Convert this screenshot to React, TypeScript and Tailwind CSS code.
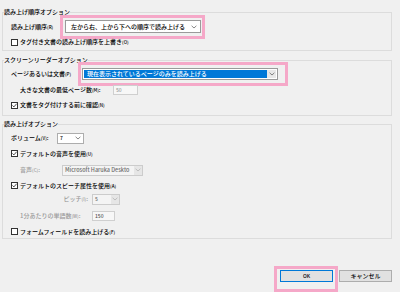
import React from "react";

const Chevron = ({ color = "#555" }: { color?: string }) => (
  <svg width="6" height="4" viewBox="0 0 6 4" className="shrink-0">
    <path d="M0.6 0.8 L3 3 L5.4 0.8" stroke={color} strokeWidth="0.7" fill="none" />
  </svg>
);

function Check({ checked }: { checked?: boolean }) {
  return (
    <span className="w-[7px] h-[7px] border border-[#333] bg-white flex items-center justify-center shrink-0">
      {checked && (
        <svg width="5" height="5" viewBox="0 0 5 5">
          <path d="M0.4 2.4 L1.9 3.9 L4.7 0.7" stroke="#222" strokeWidth="0.8" fill="none" />
        </svg>
      )}
    </span>
  );
}

const Key = ({ k }: { k: string }) => <span className="text-[4.5px]">({k})</span>;

function Group({ title, className, children }: { title: string; className: string; children: React.ReactNode }) {
  return (
    <div className={`border border-[#dcdcdc] flex flex-col ${className}`}>
      <div className="-mt-[5px] ml-[1px] w-fit bg-[#f0f0f0] text-[6px] leading-[8px] text-black">{title}</div>
      {children}
    </div>
  );
}

function CheckRow({ checked, label, k, className }: { checked?: boolean; label: string; k: string; className: string }) {
  return (
    <div className={`flex items-center pl-[8px] gap-[2px] text-[6px] leading-[8px] ${className}`}>
      <Check checked={checked} />
      <span>
        {label}
        <Key k={k} />
      </span>
    </div>
  );
}

export default function App() {
  return (
    <div className="w-[400px] h-[292px] overflow-hidden bg-[#f0f0f0] pt-[12px] pl-[2px] pr-[8px] flex flex-col text-black font-medium font-['Noto_Sans_CJK_JP','Noto_Sans',sans-serif]">
      <Group title="読み上げ順序オプション" className="h-[40px]">
        <div className="-mt-[1px] h-[24px] flex items-center pl-[8px]">
          <div className="w-[49px] shrink-0 text-[6px] leading-[8px]">
            読み上げ順序<Key k="R" />
          </div>
          <div className="w-[145px] shrink-0 h-[24px] border-[3px] border-[#f5a8c8] pl-[2px] pr-[1px] pt-[2px]">
            <div className="h-[13px] bg-white border border-[#9a9a9a] flex items-center pl-[5px] pr-[3px] text-[6px] leading-[8px]">
              <span className="flex-1 whitespace-nowrap">左から右、上から下への順序で読み上げる</span>
              <Chevron />
            </div>
          </div>
        </div>
        <CheckRow label="タグ付き文書の読み上げ順序を上書き" k="O" className="-mt-[1px] h-[8px]" />
      </Group>

      <Group title="スクリーンリーダーオプション" className="mt-[9px] h-[56px]">
        <div className="-mt-[2px] h-[24px] flex items-center pl-[8px]">
          <div className="w-[67px] shrink-0 text-[6px] leading-[8px]">
            ページあるいは文書<Key k="P" />
          </div>
          <div className="w-[210px] shrink-0 h-[24px] border-[3px] border-[#f5a8c8] pl-[1px] pr-[7px] pt-[3px]">
            <div className="h-[12px] bg-white border border-[#9a9a9a] flex items-center p-[1px] text-[6px] leading-[8px]">
              <span className="flex-1 h-full bg-[#0078d7] text-white flex items-center pl-[3px] whitespace-nowrap">
                現在表示されているページのみを読み上げる
              </span>
              <span className="w-[9px] h-full bg-[#e8e8e8] flex items-center justify-center">
                <Chevron />
              </span>
            </div>
          </div>
        </div>
        <div className="-mt-[1px] h-[10px] flex items-center pl-[17px] text-[6px] leading-[8px]">
          <div className="w-[93px] shrink-0">
            大きな文書の最低ページ数<Key k="M" />:
          </div>
          <div className="w-[25px] h-[10px] border border-[#cfcfcf] bg-[#f7f7f7] text-[#9a9a9a] pl-[2px] flex items-center text-[5px]">
            50
          </div>
        </div>
        <CheckRow checked label="文書をタグ付けする前に確認" k="N" className="mt-[5px] h-[10px]" />
      </Group>

      <Group title="読み上げオプション" className="mt-[8px] h-[117px]">
        <div className="mt-[5px] h-[11px] flex items-center pl-[8px] text-[6px] leading-[8px]">
          <div className="w-[46px] shrink-0">
            ボリューム<Key k="V" />:
          </div>
          <div className="w-[27px] h-[11px] bg-white border border-[#adadad] flex items-center pl-[2px] pr-[2px] text-[5px]">
            <span className="flex-1">7</span>
            <Chevron />
          </div>
        </div>
        <CheckRow checked label="デフォルトの音声を使用" k="U" className="mt-[5px] h-[10px]" />
        <div className="mt-[6px] h-[11px] flex items-center pl-[17px] text-[6px] leading-[8px]">
          <div className="w-[42px] shrink-0 text-[#9a9a9a]">
            音声<Key k="C" />:
          </div>
          <div className="w-[81px] h-[11px] bg-[#e6e6e6] border border-[#cccccc] flex items-center text-[#6d6d6d] text-[5.5px]">
            <span className="flex-1 pl-[2px] h-full flex items-center bg-[#f4f4f4] whitespace-nowrap overflow-hidden">
              Microsoft Haruka Deskto
            </span>
            <span className="w-[8px] flex justify-center">
              <Chevron color="#aaa" />
            </span>
          </div>
        </div>
        <CheckRow checked label="デフォルトのスピーチ属性を使用" k="A" className="mt-[5px] h-[10px]" />
        <div className="mt-[3px] h-[11px] flex items-center pl-[17px] text-[6px] leading-[8px]">
          <div className="w-[72px] shrink-0 text-[#9a9a9a] flex justify-end pr-[4px]">
            ピッチ<Key k="I" />:
          </div>
          <div className="w-[28px] h-[11px] bg-[#e6e6e6] border border-[#cccccc] flex items-center text-[#6d6d6d] text-[5px]">
            <span className="flex-1 pl-[2px] h-full flex items-center bg-[#f4f4f4]">5</span>
            <span className="w-[8px] flex justify-center">
              <Chevron color="#aaa" />
            </span>
          </div>
        </div>
        <div className="mt-[6px] h-[10px] flex items-center pl-[17px] text-[6px] leading-[8px]">
          <div className="w-[72px] shrink-0 text-[#9a9a9a]">
            1分あたりの単語数<Key k="W" />:
          </div>
          <div className="w-[23px] h-[10px] border border-[#cfcfcf] bg-[#f7f7f7] text-[#555] pl-[2px] flex items-center text-[5px]">
            150
          </div>
        </div>
        <CheckRow label="フォームフィールドを読み上げる" k="F" className="mt-[6px] h-[10px]" />
      </Group>

      <div className="mt-[27px] flex justify-end items-start">
        <div className="w-[64px] h-[26px] border-[3px] border-[#f5a8c8] pl-[3px] pt-[1px]">
          <div className="w-[53px] h-[12px] bg-[#e1e1e1] border border-[#0078d7] flex items-center justify-center text-[5px] leading-[8px]">
            OK
          </div>
        </div>
        <div className="ml-[1px] mt-[4px] w-[53px] h-[12px] bg-[#e1e1e1] border border-[#adadad] flex items-center justify-center text-[6px] leading-[8px]">
          キャンセル
        </div>
      </div>
    </div>
  );
}
